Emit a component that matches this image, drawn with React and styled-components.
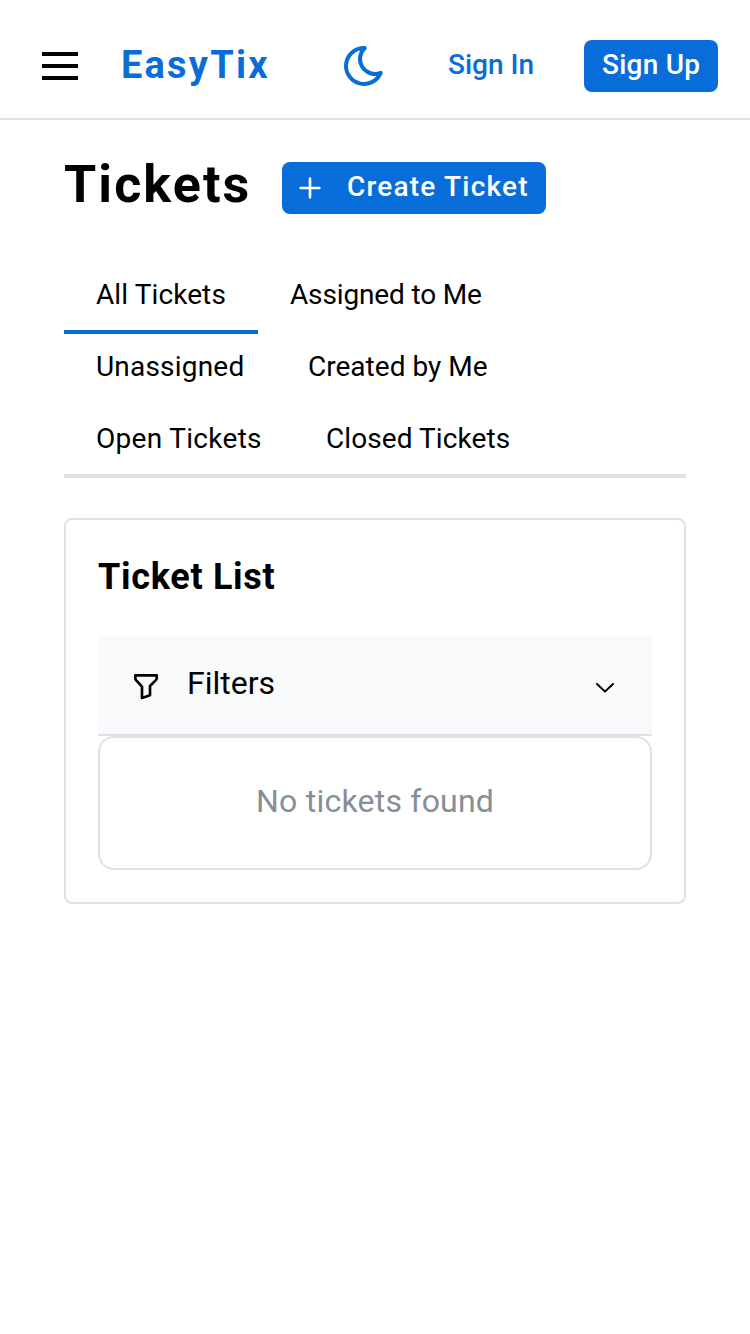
import React from 'react';
import styled, { createGlobalStyle } from 'styled-components';

const BLUE = '#096dd9';
const LINE = '#dee2e6';

const GlobalStyle = createGlobalStyle`
  * { box-sizing: border-box; }
  body { margin: 0; background: #fff; color: #000; font-family: Roboto, "Liberation Sans", sans-serif; }
  button { font-family: inherit; color: inherit; background: none; border: 0; padding: 0; margin: 0; }
  svg { display: block; flex: none; }
`;

const Label = styled.span`
  display: inline-block;
  white-space: nowrap;
  letter-spacing: ${(p) => p.$track || 0}px;
  margin-right: ${(p) => -(p.$track || 0)}px;
`;

const Header = styled.header`
  height: 120px;
  border-bottom: 2px solid ${LINE};
  padding: 12px 32px 0 42px;
  display: flex;
  align-items: flex-start;
`;

const Burger = styled.button`
  width: 36px;
  height: 28px;
  margin-top: 40px;
  display: flex;
  flex-direction: column;
  justify-content: space-between;
`;

const BurgerLine = styled.span`
  height: 4px;
  background: #000;
`;

const Logo = styled.div`
  width: 175px;
  margin: 27px 0 0 43px;
  line-height: 52px;
  font-size: 38px;
  font-weight: 700;
  color: ${BLUE};
`;

const ThemeToggle = styled.button`
  margin: 30px 0 0 44px;
  color: ${BLUE};
`;

const Button = styled.button`
  height: 52px;
  width: ${(p) => p.$width}px;
  margin-left: ${(p) => p.$gap || 0}px;
  margin-top: ${(p) => p.$top || 0}px;
  display: flex;
  align-items: flex-start;
  gap: 21px;
  padding-left: ${(p) => p.$inset}px;
  border-radius: 8px;
  font-size: 28px;
  line-height: 50px;
  font-weight: 500;
  background: ${(p) => (p.$filled ? BLUE : 'transparent')};
  color: ${(p) => (p.$filled ? '#fff' : BLUE)};

  svg { margin-top: 10px; }
`;

const Main = styled.main`
  padding: 40px 64px 0;
`;

const TitleRow = styled.div`
  display: flex;
  height: 102px;
`;

const PageTitle = styled.h1`
  width: 218px;
  margin: 0;
  font-size: 52px;
  line-height: 50px;
  font-weight: 700;
`;

const Tabs = styled.div`
  display: flex;
  flex-wrap: wrap;
  height: 216px;
  border-bottom: 4px solid #dfe1e8;
`;

const Tab = styled.button`
  width: ${(p) => p.$width}px;
  height: 72px;
  padding: 1px 0 3px 32px;
  text-align: left;
  font-size: 28px;
  line-height: 64px;
  border-bottom: 4px solid ${(p) => (p.$active ? BLUE : 'transparent')};
`;

const Card = styled.section`
  margin-top: 40px;
  height: 386px;
  padding: 32px;
  border: 2px solid ${LINE};
  border-radius: 8px;
`;

const CardTitle = styled.h2`
  margin: 0 0 36px;
  height: 48px;
  font-size: 36px;
  line-height: 50px;
  font-weight: 700;
`;

const FilterBar = styled.button`
  width: 100%;
  height: 100px;
  padding: 2px 32px 0;
  display: flex;
  align-items: center;
  background: #f8f9fb;
  border-bottom: 2px solid #dfe1e8;
  font-size: 32px;
`;

const FilterText = styled.span`
  flex: 1;
  text-align: left;
  margin-left: 25px;
  padding-bottom: 6px;
`;

const EmptyState = styled.div`
  height: 134px;
  padding-bottom: 4px;
  border: 2px solid ${LINE};
  border-radius: 16px;
  display: flex;
  align-items: center;
  justify-content: center;
  font-size: 32px;
  color: #868e96;
`;

const MoonIcon = () => (
  <svg width="48" height="48" viewBox="0 0 24 24" fill="none" stroke="currentColor" strokeWidth="2" strokeLinecap="round" strokeLinejoin="round">
    <path d="M12 3c.132 0 .263 0 .393 0a7.5 7.5 0 0 0 7.92 12.446a9 9 0 1 1 -8.313 -12.454z" />
  </svg>
);

const PlusIcon = () => (
  <svg width="32" height="32" viewBox="0 0 24 24" fill="none" stroke="currentColor" strokeWidth="2" strokeLinecap="round">
    <path d="M12 5v14M5 12h14" />
  </svg>
);

const FilterIcon = () => (
  <svg width="32" height="32" viewBox="0 0 24 24" fill="none" stroke="currentColor" strokeWidth="2" strokeLinecap="round" strokeLinejoin="round">
    <path d="M4 4h16v2.172a2 2 0 0 1-.586 1.414L15 12v7l-6 2v-8.5L4.52 7.572A2 2 0 0 1 4 6.227z" />
  </svg>
);

const ChevronIcon = () => (
  <svg width="30" height="30" viewBox="0 0 15 15" fill="currentColor">
    <path d="M3.13523 6.15803C3.3241 5.95657 3.64052 5.94637 3.84197 6.13523L7.5 9.56464L11.158 6.13523C11.3595 5.94637 11.6759 5.95657 11.8648 6.15803C12.0536 6.35949 12.0434 6.67591 11.842 6.86477L7.84197 10.6148C7.64964 10.7951 7.35036 10.7951 7.15803 10.6148L3.15803 6.86477C2.95657 6.67591 2.94637 6.35949 3.13523 6.15803Z" />
  </svg>
);

const tabs = [
  { label: 'All Tickets', width: 194, track: 0.1, active: true },
  { label: 'Assigned to Me', width: 256, track: -0.15 },
  { label: 'Unassigned', width: 212, track: 0.2 },
  { label: 'Created by Me', width: 244, track: 0.02 },
  { label: 'Open Tickets', width: 230, track: 0.3 },
  { label: 'Closed Tickets', width: 248, track: 0.08 },
];

export default function App() {
  return (
    <>
      <GlobalStyle />
      <Header>
        <Burger aria-label="Menu"><BurgerLine /><BurgerLine /><BurgerLine /></Burger>
        <Logo><Label $track={2.2}>EasyTix</Label></Logo>
        <ThemeToggle aria-label="Toggle theme"><MoonIcon /></ThemeToggle>
        <Button $width={120} $gap={42} $top={28} $inset={18}><Label>Sign In</Label></Button>
        <Button $filled $width={134} $gap={34} $top={28} $inset={18}><Label $track={0.25}>Sign Up</Label></Button>
      </Header>
      <Main>
        <TitleRow>
          <PageTitle><Label $track={2.1}>Tickets</Label></PageTitle>
          <Button $filled $width={264} $top={2} $inset={12}>
            <PlusIcon />
            <Label $track={1.2}>Create Ticket</Label>
          </Button>
        </TitleRow>
        <Tabs>
          {tabs.map((t) => (
            <Tab key={t.label} $width={t.width} $active={t.active}>
              <Label $track={t.track}>{t.label}</Label>
            </Tab>
          ))}
        </Tabs>
        <Card>
          <CardTitle><Label $track={0.7}>Ticket List</Label></CardTitle>
          <FilterBar>
            <FilterIcon />
            <FilterText><Label>Filters</Label></FilterText>
            <ChevronIcon />
          </FilterBar>
          <EmptyState><Label $track={0.22}>No tickets found</Label></EmptyState>
        </Card>
      </Main>
    </>
  );
}
